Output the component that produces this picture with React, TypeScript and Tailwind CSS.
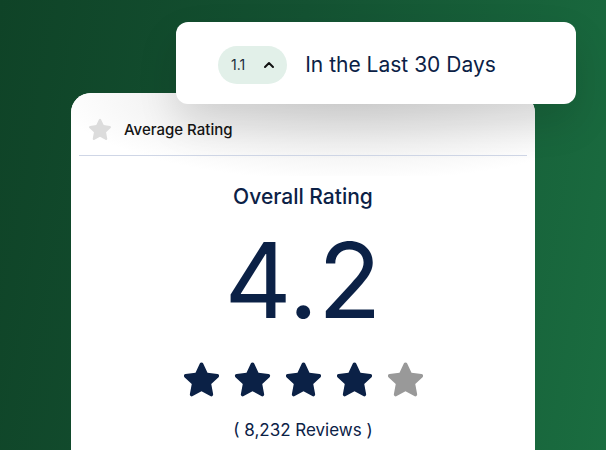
import { ChevronUp } from "lucide-react";

const font = { fontFamily: "Inter, 'Noto Sans', sans-serif" };

const StarIcon = ({ className }: { className: string }) => (
  <svg viewBox="0 0 24 24" className={className} fill="currentColor">
    <path d="M11.1 2.9a1 1 0 0 1 1.8 0l2.3 4.9 5.3.7a1 1 0 0 1 .6 1.7l-3.9 3.7 1 5.3a1 1 0 0 1-1.5 1.1L12 17.7l-4.7 2.6a1 1 0 0 1-1.5-1.1l1-5.3-3.9-3.7a1 1 0 0 1 .6-1.7l5.3-.7z" />
  </svg>
);

const App = () => {
  const stars = [true, true, true, true, false];

  return (
    <div
      className="relative w-[606px] h-[450px] overflow-hidden bg-[linear-gradient(100deg,#0f4327_0%,#145232_45%,#1a6d40_100%)]"
      style={font}
    >
      {/* Main card */}
      <div className="ml-[71px] mt-[93px] w-[464px] h-[400px] rounded-t-[20px] bg-white overflow-hidden">
        <div className="bg-[radial-gradient(ellipse_at_60%_0%,#e0e0e0_0%,#ededed_35%,#ffffff_75%)]">
          <div className="flex items-center gap-[10px] pl-[15px] pt-[23px] pb-[11px]">
            <StarIcon className="w-[28px] h-[28px] text-[#dcdcdc]" />
            <span className="text-[15px] font-medium text-[#141414]">Average Rating</span>
          </div>
          <div className="mx-[8px] h-px bg-[#cfd6e6]" />
          <div className="h-[20px]" />
        </div>
        <div className="flex flex-col items-center text-[#0b2146]">
          <div className="mt-[6px] text-[21px] font-medium leading-[30px]">Overall Rating</div>
          <div className="mt-[18px] text-[104px] font-normal leading-[100px]">4.2</div>
          <div className="mt-[28px] flex gap-[6px]">
            {stars.map((on, i) => (
              <StarIcon
                key={i}
                className={`w-[45px] h-[45px] ${on ? "text-[#0b2146]" : "text-[#999999]"}`}
              />
            ))}
          </div>
          <div className="mt-[15px] text-[17px]">( 8,232 Reviews )</div>
        </div>
      </div>

      {/* Period popup */}
      <div className="absolute left-[176px] top-[22px] w-[400px] h-[82px] rounded-[12px] bg-white shadow-[0_18px_40px_rgba(0,0,0,0.12)] flex items-center pl-[42px] pt-[3px]">
        <div className="flex items-center gap-[16px] h-[38px] pl-[13px] pr-[10px] rounded-full bg-[#e2f0e9]">
          <span className="text-[14px] text-[#1b2a3a]">1.1</span>
          <ChevronUp className="w-[16px] h-[16px] text-[#111]" strokeWidth={3} />
        </div>
        <span className="ml-[18px] text-[21px] text-[#0b2146]">In the Last 30 Days</span>
      </div>
    </div>
  );
};

export default App;
